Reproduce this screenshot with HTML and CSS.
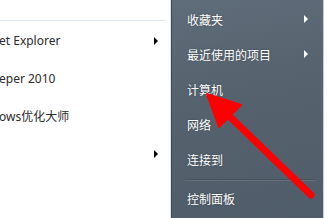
FILE: index.html
```html
<!DOCTYPE html>
<html lang="zh">
<head>
<meta charset="utf-8">
<link rel="stylesheet" href="styles.css">
</head>
<body>
<div class="menu">
  <div class="left">
    <div class="sep-top"></div>
    <div class="litem"><span class="ltext">et Explorer</span><span class="tri-dark"></span></div>
    <div class="litem"><span class="ltext">eper 2010</span></div>
    <div class="litem"><span class="ltext">ows优化大师</span></div>
    <div class="litem"><span class="ltext"></span><span class="tri-dark"></span></div>
  </div>
  <div class="edge"></div>
  <div class="right">
    <div class="ritem"><span>收藏夹</span><span class="tri-light"></span></div>
    <div class="ritem"><span>最近使用的项目</span><span class="tri-light"></span></div>
    <div class="ritem"><span>计算机</span></div>
    <div class="ritem"><span>网络</span></div>
    <div class="ritem"><span>连接到</span></div>
    <div class="rsep"></div>
    <div class="ritem"><span>控制面板</span></div>
  </div>
  <div class="outer"></div>
</div>
<svg class="annot" width="327" height="218" viewBox="0 0 327 218">
  <line x1="311" y1="195" x2="226" y2="113" stroke="#ff0000" stroke-width="7" stroke-linecap="round"/>
  <polygon points="207,94 241,105 219,127" fill="#ff0000" stroke="#ff0000" stroke-width="2" stroke-linejoin="round"/>
</svg>
</body>
</html>
```
FILE: styles.css
```css
html, body {
  margin: 0;
  padding: 0;
  width: 327px;
  height: 218px;
  overflow: hidden;
  background: #ffffff;
}
.menu {
  display: flex;
  width: 327px;
  height: 218px;
}
.left {
  width: 170px;
  flex: none;
  background: #ffffff;
  display: flex;
  flex-direction: column;
}
.sep-top {
  height: 20px;
  width: 165px;
  border-bottom: 1px solid #dce5ee;
  flex: none;
  margin-bottom: 1px;
}
.litem {
  height: 37.6px;
  display: flex;
  align-items: center;
  justify-content: space-between;
  padding-right: 12px;
  flex: none;
}
.ltext {
  font-family: "Noto Sans", "Noto Sans CJK SC", sans-serif;
  font-size: 12px;
  color: #2b2b2b;
  margin-left: -1px;
  white-space: nowrap;
}
.tri-dark {
  width: 0;
  height: 0;
  border-top: 4px solid transparent;
  border-bottom: 4px solid transparent;
  border-left: 4px solid #000000;
}
.edge {
  width: 2px;
  flex: none;
  background: linear-gradient(90deg, #dbe6ef 0 1px, #3b4855 1px 2px);
}
.right {
  width: 151px;
  flex: none;
  background: linear-gradient(170deg, #5f6c79 0%, #56636f 40%, #4f5c69 100%);
  display: flex;
  flex-direction: column;
  padding-top: 1.5px;
  box-sizing: border-box;
}
.ritem {
  height: 35px;
  flex: none;
  display: flex;
  align-items: center;
  justify-content: space-between;
  padding: 0 15px 0 15px;
  font-family: "Noto Sans CJK SC", sans-serif;
  font-size: 12px;
  color: #ffffff;
  text-shadow: 0 0 2px rgba(0,0,0,0.35);
}
.tri-light {
  width: 0;
  height: 0;
  border-top: 4px solid transparent;
  border-bottom: 4px solid transparent;
  border-left: 4px solid #ffffff;
}
.rsep {
  flex: none;
  margin: 2px 8px 0 13px;
  height: 0;
  border-top: 1px solid #47525e;
  border-bottom: 1px solid #64707c;
}
.outer {
  flex: 1;
  border-left: 1px solid #c6cdd4;
  background: #ffffff;
}
.annot {
  position: absolute;
  left: 0;
  top: 0;
}
```
